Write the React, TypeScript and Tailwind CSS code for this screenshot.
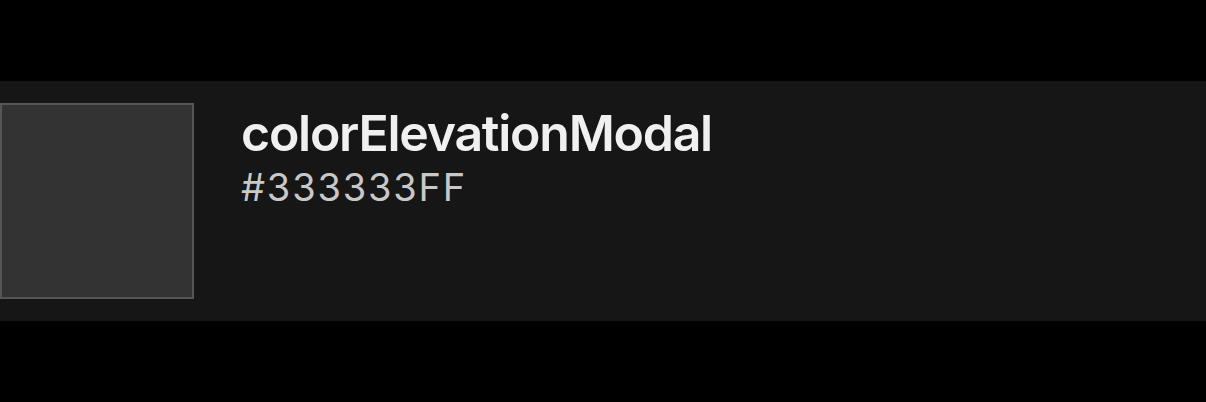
export default function App() {
  return (
    <div className="h-[402px] w-[1206px] bg-black pt-[81px]" style={{ fontFamily: 'Inter, "Noto Sans", sans-serif' }}>
      <div className="flex h-[240px] items-start bg-[#161616] pt-[22px]">
        <div className="h-[196px] w-[194px] shrink-0 border-2 border-[#555555] bg-[#333333]" />
        <div className="ml-[47px] flex flex-col pt-[5px]">
          <span className="text-[50px] font-semibold leading-[50px] tracking-[-1.25px] text-[#f0f0f0]">colorElevationModal</span>
          <span className="mt-[10px] text-[38px] font-normal leading-[38px] tracking-[1.8px] text-[#c8c8c8]">#333333FF</span>
        </div>
      </div>
    </div>
  );
}
